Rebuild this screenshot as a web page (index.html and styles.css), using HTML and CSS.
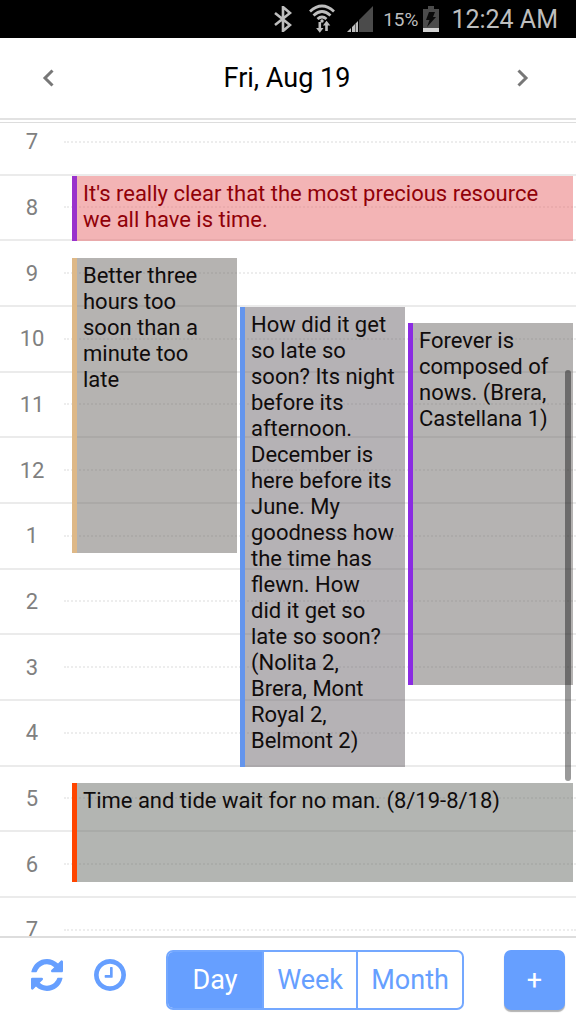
FILE: index.html
```html
<!DOCTYPE html>
<html lang="en">
<head>
<meta charset="utf-8">
<meta name="viewport" content="width=device-width, initial-scale=1">
<title>Calendar</title>
<link rel="stylesheet" href="styles.css">
</head>
<body class="app">
<div class="status">
  <svg class="status-bt" viewBox="0 0 18 26" aria-hidden="true"><path d="M1 7l15 12-7 6V1l7 6L1 19" fill="none" stroke="#bebebe" stroke-width="2.6"/></svg>
  <svg class="status-wifi" viewBox="0 0 26 30" aria-hidden="true"><g fill="none" stroke="#bebebe" stroke-width="2.8"><path d="M1 7.500Q13-3.500 25 7.500M4.500 11.500Q13 3.500 21.500 11.500M8.500 15Q13 11 17.500 15"/></g><circle cx="13" cy="17" r="1.700" fill="#bebebe"/><path d="M9.500 18h2.600v6h2.400l-3.700 4.800L7.100 24h2.400zM16.200 27v-5.500h-2.300l3.700-4.700 3.700 4.700h-2.500V27z" fill="#bebebe"/></svg>
  <svg class="status-signal" viewBox="0 0 26 26" aria-hidden="true"><path d="M12 14L26 0v26H12z" fill="#4b4b4b"/><path d="M0 26l4-4v4zM5 21l3-3v8H5zM8.500 17.500L11 15v11H8.500z" fill="#bebebe"/></svg>
  <span class="status-percent">15%</span>
  <svg class="status-battery" viewBox="0 0 16 26" aria-hidden="true"><path d="M0 3h5V0h6v3h5v20H0z" fill="#4b4b4b"/><path d="M0 22h16v4H0z" fill="#d2d2d2"/><path d="M6 6h6l-2 5h3L4 21l2.500-7H3z" fill="#0a0a0a"/></svg>
  <span class="status-time">12:24 AM</span>
</div>
<header class="header">
  <button class="step" type="button" aria-label="Previous day"><svg class="step-icon" viewBox="0 0 12 18"><path d="M10.500 1.500L3 9l7.500 7.500" /></svg></button>
  <h1 class="title">Fri, Aug 19</h1>
  <button class="step" type="button" aria-label="Next day"><svg class="step-icon" viewBox="0 0 12 18"><path d="M1.500 1.500L9 9l-7.500 7.500" /></svg></button>
</header>
<main class="viewport">
  <div class="day">
    <div class="hours">
      <div class="hour">7</div><div class="hour">8</div><div class="hour">9</div><div class="hour">10</div><div class="hour">11</div><div class="hour">12</div><div class="hour">1</div><div class="hour">2</div><div class="hour">3</div><div class="hour">4</div><div class="hour">5</div><div class="hour">6</div><div class="hour">7</div>
    </div>
    <div class="events">
      <article class="event event-resource">It's really clear that the most precious resource we all have is time.</article>
      <article class="event event-better">Better three hours too<br>soon than a<br>minute too<br>late</article>
      <article class="event event-late">How did it get so late so soon? Its night before its afternoon. December is here before its June. My goodness how the time has flewn. How<br>did it get so<br>late so soon? (Nolita 2, Brera, Mont Royal 2, Belmont 2)</article>
      <article class="event event-nows">Forever is composed of nows. (Brera, Castellana 1)</article>
      <article class="event event-tide">Time and tide wait for no man. (8/19-8/18)</article>
    </div>
  </div>
  <div class="scrollbar"></div>
</main>
<footer class="footer">
  <button class="tool" type="button" aria-label="Refresh"><svg class="tool-icon" viewBox="0 0 1536 1536"><path d="M1511 928q0 5-1 7-64 268-268 434.500T764 1536q-146 0-282.500-55T238 1324l-129 129q-19 19-45 19t-45-19-19-45V960q0-26 19-45t45-19h448q26 0 45 19t19 45-19 45l-137 137q71 66 161 102t187 36q134 0 250-65t186-179q11-17 53-117 8-23 30-23h192q13 0 22.500 9.500t9.500 22.500zm25-800v448q0 26-19 45t-45 19h-448q-26 0-45-19t-19-45 19-45l138-138Q969 256 768 256q-134 0-250 65T332 500q-11 17-53 117-8 23-30 23H50q-13 0-22.500-9.500T18 608v-7q65-268 270-434.500T768 0q146 0 284 55.500T1297 212l130-129q19-19 45-19t45 19 19 45z"/></svg></button>
  <button class="tool" type="button" aria-label="Now"><svg class="tool-icon" viewBox="0 0 1536 1536"><path d="M896 416v448q0 14-9 23t-23 9H544q-14 0-23-9t-9-23v-64q0-14 9-23t23-9h224V416q0-14 9-23t23-9h64q14 0 23 9t9 23zm416 352q0-148-73-273t-198-198-273-73-273 73-198 198-73 273 73 273 198 198 273 73 273-73 198-198 73-273zm224 0q0 209-103 385.500T1153.500 1433 768 1536t-385.500-103T103 1153.500 0 768t103-385.500T382.500 103 768 0t385.500 103T1433 382.500 1536 768z"/></svg></button>
  <div class="views">
    <button class="view view-active" type="button" aria-pressed="true">Day</button>
    <button class="view" type="button" aria-pressed="false">Week</button>
    <button class="view view-wide" type="button" aria-pressed="false">Month</button>
  </div>
  <button class="add" type="button" aria-label="Add event">+</button>
</footer>
</body>
</html>
```
FILE: styles.css
```css
* { box-sizing: border-box; }

.app {
  display: flex;
  flex-direction: column;
  height: 100vh;
  margin: 0;
  background: #fff;
  font-family: Roboto, "Liberation Sans", sans-serif;
  font-size: 22px;
}

button {
  margin: 0;
  padding: 0;
  border: 0;
  background: none;
  font: inherit;
}

.status {
  flex: none;
  display: flex;
  align-items: center;
  justify-content: flex-end;
  height: 38px;
  padding-right: 18px;
  background: #000;
  color: #bebebe;
}
.status-bt { width: 18px; height: 26px; margin-right: 17px; }
.status-wifi { width: 26px; height: 30px; margin-right: 12px; }
.status-signal { width: 26px; height: 26px; margin-right: 10px; }
.status-percent { margin-right: 5px; font-size: 19px; }
.status-battery { width: 16px; height: 26px; margin-right: 12px; }
.status-time { font-size: 25px; }

.header {
  flex: none;
  display: flex;
  align-items: center;
  justify-content: space-between;
  height: 82px;
  padding: 0 34px 0 32px;
  border-bottom: 2px solid #e2e2e2;
}
.step { display: flex; align-items: center; justify-content: center; width: 38px; height: 48px; }
.step-icon { width: 12px; height: 18px; fill: none; stroke: #777; stroke-width: 3; }
.step:first-child { justify-content: flex-start; padding-left: 10px; }
.title { margin: 0; font-size: 27px; font-weight: 400; line-height: 32px; }

.viewport {
  position: relative;
  flex: 1;
  min-height: 0;
  margin-top: 2px;
  overflow: hidden;
  border-top: 1px solid #ddd;
  border-bottom: 2px solid #ddd;
}
.day {
  display: grid;
  grid-template-columns: 64px 8px minmax(0, 1fr);
  height: 105%;
  margin-top: -13px;
}
.hours {
  grid-area: 1 / 1 / 2 / 4;
  display: grid;
  grid-template-rows: repeat(13, minmax(0, 1fr));
}
.hour {
  display: grid;
  grid-template-columns: 64px 1fr;
  align-items: center;
  border-bottom: 2px solid #ebebeb;
  color: #808080;
  text-align: center;
}
.hour::after { content: ""; border-top: 2px dotted #ededed; }

/* One row per quarter hour, one column per overlapping event. */
.events {
  grid-area: 1 / 3 / 2 / 4;
  display: grid;
  grid-template-columns: repeat(3, minmax(0, 1fr));
  grid-template-rows: repeat(52, minmax(0, 1fr));
}
.event {
  margin-right: 3px;
  padding: 5px 6px;
  overflow: hidden;
  border-left: 5px solid;
  background-clip: padding-box;
  color: #100c0c;
  line-height: 26px;
}
.event-resource { grid-area: 5 / 1 / 9 / 4; border-color: #9932cc; background-color: rgba(231, 105, 108, .5); color: #900008; }
.event-better { grid-area: 10 / 1 / 28 / 2; border-color: #deb887; background-color: rgba(107, 103, 99, .5); }
.event-late { grid-area: 13 / 2 / 41 / 3; border-color: #6495ed; background-color: rgba(107, 101, 107, .5); }
.event-nows { grid-area: 14 / 3 / 36 / 4; border-color: #8a2be2; background-color: rgba(107, 103, 101, .5); }
.event-tide { grid-area: 42 / 1 / 48 / 4; border-color: #ff4500; background-color: rgba(103, 107, 101, .5); }

.scrollbar {
  position: absolute;
  top: 247px;
  right: 5px;
  width: 6px;
  height: 411px;
  border-radius: 3px;
  background: rgba(0, 0, 0, .4);
}

.footer {
  flex: none;
  display: flex;
  align-items: center;
  height: 86px;
  padding: 0 11px 2px 31px;
  color: #669fff;
}
.tool { display: flex; width: 32px; height: 42px; margin-right: 31px; }
.tool-icon { width: 32px; height: 32px; fill: #669fff; }
.views {
  display: flex;
  flex: 0 1 298px;
  height: 60px;
  margin: 0 auto 0 9px;
  overflow: hidden;
  border: 2px solid #74a8ff;
  border-radius: 7px;
}
.view { flex: 0 0 32%; color: #669fff; font-size: 27px; }
.view-wide { flex-basis: 36%; }
.view + .view { border-left: 2px solid #74a8ff; }
.view-active { background: #669fff; color: #fff; }
.add {
  width: 61px;
  height: 60px;
  border-radius: 7px;
  background: #669fff;
  box-shadow: 0 2px 1px rgba(0, 0, 0, .3);
  color: #fff;
  font-size: 27px;
}
```
